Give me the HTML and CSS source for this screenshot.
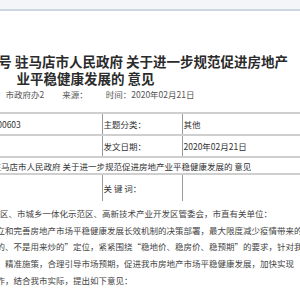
FILE: index.html
```html
<!DOCTYPE html>
<html lang="zh-CN">
<head>
<meta charset="utf-8">
<title>驻马店市人民政府 关于进一步规范促进房地产业平稳健康发展的 意见</title>
<link rel="stylesheet" href="styles.css">
</head>
<body>
<div class="topbar"></div>
<main class="doc">
  <h1 class="title">
    <span class="tline">驻政办〔2020〕13号 驻马店市人民政府 关于进一步规范促进房地产</span>
    <span class="tline">业平稳健康发展的 意见</span>
  </h1>
  <div class="meta">
    <span class="mitem">来稿：市政府办2</span>
    <span class="mitem">来源：</span>
    <span class="mitem">时间：2020年02月21日</span>
  </div>
  <table class="info">
    <colgroup>
      <col class="c1"><col class="c2"><col class="c3"><col class="c4">
    </colgroup>
    <tr>
      <th>索 引 号：</th><td>200603</td>
      <th>主题分类：</th><td>其他</td>
    </tr>
    <tr>
      <th>发文机关：</th><td></td>
      <th>发文日期：</th><td>2020年02月21日</td>
    </tr>
    <tr class="trow">
      <th>标　　题：</th><td colspan="3">驻马店市人民政府 关于进一步规范促进房地产业平稳健康发展的 意见</td>
    </tr>
    <tr class="krow">
      <th>发文字号：</th><td></td>
      <th>关 键 词：</th><td></td>
    </tr>
  </table>
  <div class="body">
    <p class="salute">各县区、市城乡一体化示范区、高新技术产业开发区管委会，市直有关单位：</p>
    <p class="para">
      <span class="line">建立和完善房地产市场平稳健康发展长效机制的决策部署，最大限度减少疫情带来的不利影响</span>
      <span class="line">住的、不是用来炒的”定位，紧紧围绕“稳地价、稳房价、稳预期”的要求，针对我市房地产市场</span>
      <span class="line">策、精准施策，合理引导市场预期，促进我市房地产市场平稳健康发展，加快实现</span>
      <span class="line">工作，结合我市实际，提出如下意见：</span>
    </p>
  </div>
</main>
</body>
</html>
```
FILE: styles.css
```css
html, body {
  margin: 0;
  padding: 0;
  background: #fff;
  overflow: hidden;
}
body {
  width: 300px;
  height: 300px;
  font-family: "Noto Sans CJK SC", "Noto Sans", sans-serif;
  color: #333;
}
.topbar {
  height: 9px;
  background: #f3f5f8;
  border-bottom: 2px solid #cdd6e1;
}
.doc {
  display: flex;
  flex-direction: column;
  align-items: flex-start;
  margin-left: -120px;
  width: 700px;
}
.title {
  margin: 42px 0 0 -94.5px;
  width: 600px;
  display: flex;
  flex-direction: column;
  align-items: center;
  font-size: 13.5px;
  line-height: 17px;
  font-weight: 700;
  color: #2b2b2b;
}
.meta {
  margin: 0 0 0 100px;
  display: flex;
  gap: 18px;
  font-size: 8.5px;
  line-height: 14px;
  color: #555;
}
.info {
  margin-top: 11px;
  margin-left: 10px;
  border-collapse: collapse;
  table-layout: fixed;
  width: 520px;
  font-size: 8.5px;
  color: #333;
}
.info .c1 { width: 100.5px; }
.info .c2 { width: 111px; }
.info .c3 { width: 80px; }
.info .c4 { width: 228.5px; }
.info th, .info td {
  height: 20px;
  padding: 0 1px;
  text-align: left;
  font-weight: 400;
  white-space: nowrap;
  border-top: 2px solid #cfcfcf;
  border-bottom: 2px solid #cfcfcf;
  border-left: 1px solid #9a9a9a;
}
.info .trow th, .info .trow td {
  height: 15px;
}
.info .krow th, .info .krow td {
  height: 26px;
  border-bottom: 0;
}
.body {
  margin: 4px 0 0 103px;
  font-size: 8.5px;
  line-height: 16.7px;
  color: #444;
}
.salute, .para {
  margin: 0;
  white-space: nowrap;
}
.para {
  margin-left: 5px;
}
.line {
  display: block;
}
```
